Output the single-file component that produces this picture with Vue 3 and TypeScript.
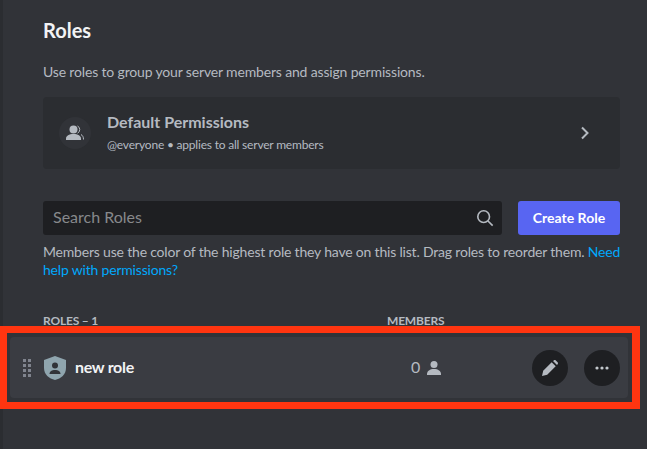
<script setup lang="ts">
const grip: number[][] = [[0,0],[5,0],[0,5],[5,5],[0,10],[5,10],[0,15],[5,15]]
</script>

<template>
  <div class="page">
    <main class="content">
      <h1 class="title">Roles</h1>
      <p class="lead">Use roles to group your server members and assign permissions.</p>

      <section class="card">
        <span class="avatar">
          <svg width="20" height="20" viewBox="0 0 20 20">
            <circle cx="8.500" cy="6.500" r="4" fill="#b5bac1" />
            <path d="M1 17v-1.500C1 12.800 4 11 8.500 11s7.500 1.800 7.500 4.500V17z" fill="#b5bac1" />
            <path d="M12.500 3a4 4 0 0 1 0 7.200M16 11.500c1.500.9 2.500 2.300 2.500 5" fill="none" stroke="#b5bac1" stroke-width="1" />
          </svg>
        </span>
        <div class="card-text">
          <div class="card-title">Default Permissions</div>
          <div class="card-sub">@everyone • applies to all server members</div>
        </div>
        <svg class="chevron" width="10" height="14" viewBox="0 0 10 14">
          <path d="M2 1.500 7.500 7 2 12.500" fill="none" stroke="#b5bac1" stroke-width="2" />
        </svg>
      </section>

      <div class="tools">
        <div class="search">
          <span class="placeholder">Search Roles</span>
          <svg width="18" height="18" viewBox="0 0 20 20">
            <circle cx="8.500" cy="8.500" r="6.500" fill="none" stroke="#b5bac1" stroke-width="1.800" />
            <path d="M13.300 13.300 18.500 18.500" stroke="#b5bac1" stroke-width="1.800" />
          </svg>
        </div>
        <button class="create">Create Role</button>
      </div>

      <p class="help">Members use the color of the highest role they have on this list. Drag roles to reorder them. <a class="link">Need help with permissions?</a></p>

      <div class="heads">
        <span class="head-name">ROLES – 1</span>
        <span>MEMBERS</span>
      </div>
    </main>

    <div class="frame">
      <div class="row">
        <svg class="grip" width="8" height="18" viewBox="0 0 8 18">
          <rect v-for="(g, i) in grip" :key="i" :x="g[0]" :y="g[1]" width="3" height="3" fill="#80848e" />
        </svg>
        <svg class="shield" width="22" height="24" viewBox="0 0 22 24">
          <path d="M11 0 22 4V12c0 6.500-5 10.500-11 12C5 22.500 0 18.500 0 12V4z" fill="#8fa5ae" />
          <circle cx="11" cy="9.500" r="3" fill="#313338" />
          <path d="M5.500 18c0-2.700 2.500-4 5.500-4s5.500 1.300 5.500 4z" fill="#313338" />
        </svg>
        <span class="name">new role</span>
        <span class="count">0</span>
        <svg class="person" width="16" height="16" viewBox="0 0 16 16">
          <circle cx="8" cy="4.500" r="3.500" fill="#b5bac1" />
          <path d="M1 15v-1c0-3 3-5 7-5s7 2 7 5v1z" fill="#b5bac1" />
        </svg>
        <button class="round">
          <svg width="16" height="16" viewBox="0 0 16 16">
            <path d="M0 16 1.200 10.800 9.700 2.300 13.700 6.300 5.200 14.800z" fill="#b5bac1" />
            <path d="M11 1 11.800.4c.6-.5 1.400-.5 2 0l1.800 1.800c.5.6.5 1.400 0 2L15 5z" fill="#b5bac1" />
          </svg>
        </button>
        <button class="round second">
          <svg width="14" height="4" viewBox="0 0 14 4">
            <circle cx="2" cy="2" r="1.600" fill="#c4c9ce" />
            <circle cx="7" cy="2" r="1.600" fill="#c4c9ce" />
            <circle cx="12" cy="2" r="1.600" fill="#c4c9ce" />
          </svg>
        </button>
      </div>
    </div>
  </div>
</template>

<style>
html, body { margin: 0; background: #313338; }
</style>

<style scoped>
.page {
  width: 647px;
  height: 449px;
  box-sizing: border-box;
  overflow: hidden;
  background: #313338;
  font-family: Lato, "Noto Sans", sans-serif;
  position: relative;
}
.page::before {
  content: "";
  position: absolute;
  left: 0;
  top: 0;
  bottom: 0;
  width: 3px;
  background: #2b2d31;
}
.content {
  padding: 18px 27px 0 43px;
}
.title {
  margin: 0;
  font-size: 20px;
  line-height: 24px;
  font-weight: 700;
  color: #f2f3f5;
}
.lead {
  margin: 21px 0 0;
  font-size: 14px;
  line-height: 18px;
  letter-spacing: -0.16px;
  color: #b5bac1;
}
.card {
  margin-top: 16px;
  height: 72px;
  box-sizing: border-box;
  padding: 0 30px 0 16px;
  display: flex;
  align-items: center;
  background: #2b2d31;
  border-radius: 4px;
}
.avatar {
  width: 32px;
  height: 32px;
  border-radius: 50%;
  background: #313338;
  display: flex;
  align-items: center;
  justify-content: center;
}
.card-text { margin-left: 16px; flex: 1; }
.card-title {
  font-size: 16px;
  line-height: 20px;
  font-weight: 700;
  color: #b5bac1;
  margin-top: -1px;
}
.card-sub {
  margin-top: 5px;
  font-size: 12px;
  line-height: 16px;
  letter-spacing: -0.2px;
  color: #b5bac1;
}
.tools {
  margin-top: 32px;
  display: flex;
  gap: 16px;
}
.search {
  flex: 1;
  height: 34px;
  box-sizing: border-box;
  padding: 0 8px 0 10px;
  display: flex;
  align-items: center;
  justify-content: space-between;
  background: #1e1f22;
  border-radius: 3px;
}
.placeholder {
  font-size: 16px;
  line-height: 20px;
  margin-bottom: 3px;
  color: #87898c;
}
.create {
  width: 102px;
  height: 34px;
  border: 0;
  padding: 0 0 1px;
  border-radius: 3px;
  background: #5865f2;
  color: #fff;
  font: 700 14px Lato, sans-serif;
}
.help {
  margin: 8px -3px 0 0;
  font-size: 14px;
  line-height: 18px;
  letter-spacing: -0.19px;
  color: #b5bac1;
}
.link { color: #00a8fc; }
.heads {
  margin-top: 34px;
  display: flex;
  font-size: 12px;
  line-height: 16px;
  font-weight: 700;
  letter-spacing: -0.2px;
  color: #b5bac1;
}
.head-name { width: 344px; }
.frame {
  position: absolute;
  left: 0;
  top: 326px;
  width: 640px;
  height: 83px;
  box-sizing: border-box;
  border: 7px solid #ff3510;
  border-right-width: 8px;
  padding: 4px 4px 4px 3px;
}
.row {
  height: 61px;
  box-sizing: border-box;
  padding: 0 8px 0 13px;
  display: flex;
  align-items: center;
  background: #3a3c42;
  border-radius: 4px;
}
.grip { flex: none; }
.shield { flex: none; margin-left: 13px; }
.name {
  margin-left: 9px;
  width: 336px;
  font-size: 16px;
  line-height: 20px;
  font-weight: 700;
  letter-spacing: -0.3px;
  margin-bottom: 2px;
  color: #f2f3f5;
}
.count {
  width: 16px;
  font-size: 16px;
  line-height: 20px;
  margin-bottom: 2px;
  padding-left: 1px;
  box-sizing: border-box;
  color: #b5bac1;
}
.person { flex: none; }
.round {
  flex: none;
  margin-left: 90px;
  width: 36px;
  height: 36px;
  border: 0;
  padding: 0;
  border-radius: 50%;
  background: #1e1f22;
  display: flex;
  align-items: center;
  justify-content: center;
}
.round.second { margin-left: 16px; }
</style>
